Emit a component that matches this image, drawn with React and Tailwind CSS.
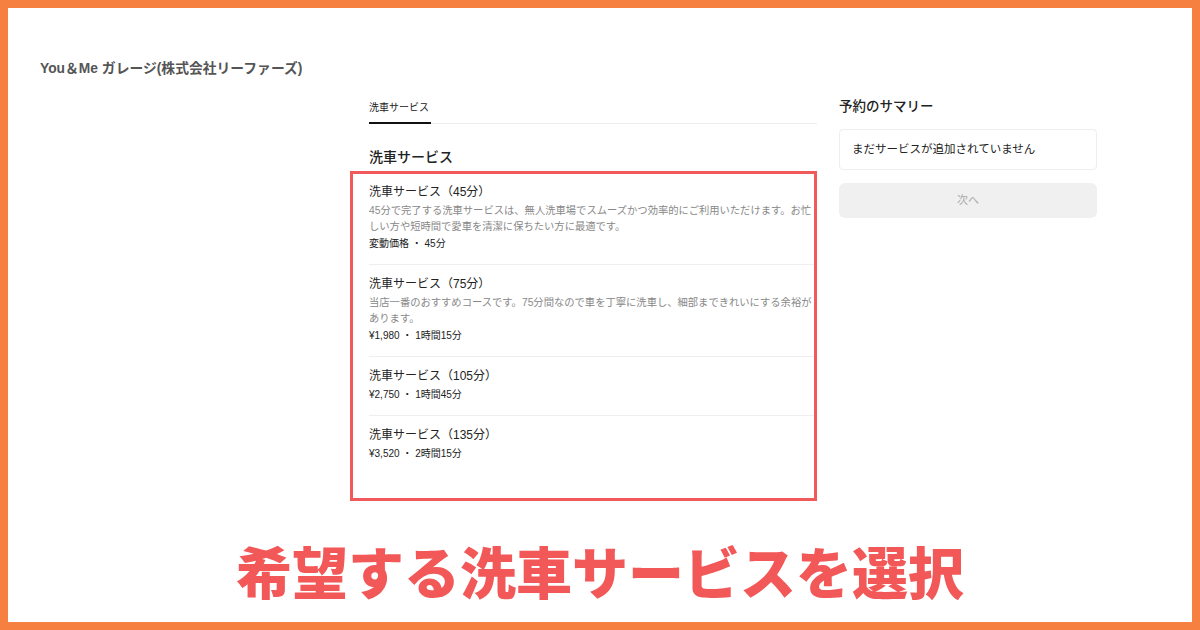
import React from 'react';

const services = [
  {
    title: '洗車サービス（45分）',
    desc: [
      '45分で完了する洗車サービスは、無人洗車場でスムーズかつ効率的にご利用いただけます。お忙',
      'しい方や短時間で愛車を清潔に保ちたい方に最適です。',
    ],
    meta: '変動価格 ・ 45分',
  },
  {
    title: '洗車サービス（75分）',
    desc: [
      '当店一番のおすすめコースです。75分間なので車を丁寧に洗車し、細部まできれいにする余裕が',
      'あります。',
    ],
    meta: '¥1,980 ・ 1時間15分',
  },
  { title: '洗車サービス（105分）', desc: [], meta: '¥2,750 ・ 1時間45分' },
  { title: '洗車サービス（135分）', desc: [], meta: '¥3,520 ・ 2時間15分' },
];

export default function App() {
  return (
    <div className="w-[1200px] h-[630px] border-8 border-[#F5803F] bg-white flex flex-col font-['Liberation_Sans','Noto_Sans_CJK_JP',sans-serif]">
      {/* store name */}
      <div className="mt-[51px] px-[32px] leading-[20px] text-[13.8px] font-bold text-[#555]">
        You＆Me ガレージ(株式会社リーファーズ)
      </div>

      <div className="mt-[19px] ml-[342px] flex gap-[22px]">
        {/* services column */}
        <div className="w-[467px]">
          <div className="ml-[19px] flex border-b border-[#eee]">
            <div className="w-[62px] -mb-px border-b-2 border-[#111] pb-[4px] leading-[20px] text-[10px] text-[#222]">
              洗車サービス
            </div>
          </div>

          <h2 className="ml-[19px] mt-[23px] leading-[20px] text-[14px] font-medium text-[#222]">洗車サービス</h2>

          <div className="mt-[4px] h-[330px] border-[3px] border-[#F05A5A]">
            {services.map((s, i) => (
              <div
                key={s.title}
                className={`ml-[16px] pb-[12px] ${i === 0 ? 'pt-[9px]' : 'pt-[10px]'} ${i < services.length - 1 ? 'border-b border-[#eee]' : ''}`}
              >
                <div className="leading-[18px] text-[12px] text-[#222]">{s.title}</div>
                {s.desc.length > 0 && (
                  <div className="mt-[2px] leading-[16px] text-[10.3px] text-[#888] whitespace-nowrap">
                    {s.desc.map(line => (
                      <div key={line}>{line}</div>
                    ))}
                  </div>
                )}
                <div className={`${s.desc.length > 0 ? 'mt-[1px]' : 'mt-[2px]'} leading-[16px] text-[10px] text-[#222]`}>{s.meta}</div>
              </div>
            ))}
          </div>
        </div>

        {/* summary column */}
        <div className="w-[258px]">
          <div className="leading-[18px] text-[13.5px] font-medium text-[#222]">予約のサマリー</div>
          <div className="mt-[13px] h-[41px] flex items-center px-[12px] border border-[#eee] rounded-sm text-[11.5px] text-[#222]">
            まだサービスが追加されていません
          </div>
          <button className="mt-[13px] w-full h-[35px] rounded-md bg-[#f0f0f0] text-[11px] text-[#aaa]">次へ</button>
        </div>
      </div>

      <div className="mt-[34px] text-center leading-[70px] text-[56px] font-black text-[#F25858] font-['Noto_Sans_CJK_JP',sans-serif]">
        希望する洗車サービスを選択
      </div>
    </div>
  );
}
